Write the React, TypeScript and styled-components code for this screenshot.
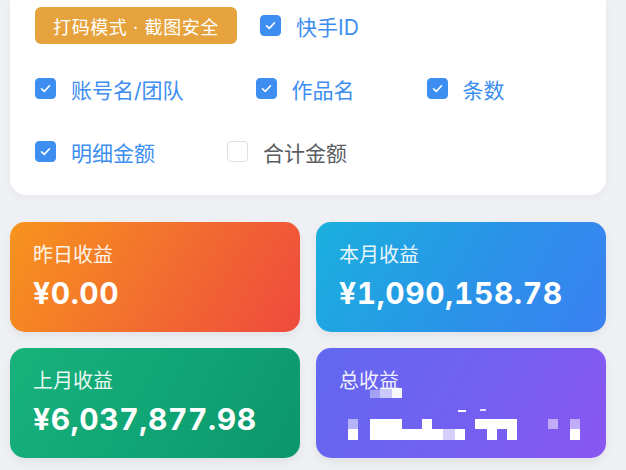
import styled, { createGlobalStyle } from 'styled-components'

const GlobalStyle = createGlobalStyle`
  html, body {
    margin: 0;
    padding: 0;
    background: #eef0f3;
  }
  body {
    font-family: Inter, "Noto Sans CJK SC", "Noto Sans", sans-serif;
    -webkit-font-smoothing: antialiased;
  }
`

const Page = styled.div`
  width: 626px;
  height: 470px;
  overflow: hidden;
  padding: 0 20px 0 10px;
  box-sizing: border-box;
  background: #eef0f3;
`

const OptionsCard = styled.div`
  background: #fff;
  border-radius: 0 0 16px 16px;
  padding: 7px 25px 25px;
  display: flex;
  flex-direction: column;
  gap: 26px;
  box-shadow: 0 2px 8px rgba(0, 0, 0, 0.04);
`

const Row = styled.div<{ $gap: number }>`
  display: flex;
  align-items: center;
  height: 37px;
  gap: ${(p) => p.$gap}px;
`

const Badge = styled.div`
  width: 202px;
  height: 37px;
  box-sizing: border-box;
  display: flex;
  align-items: center;
  justify-content: center;
  background: #e6a23c;
  color: #fff;
  font-size: 18px;
  letter-spacing: 0.6px;
  border-radius: 6px;
  white-space: nowrap;
`

const Option = styled.label<{ $checked: boolean }>`
  display: flex;
  align-items: center;
  gap: 15px;
  font-size: 21px;
  color: ${(p) => (p.$checked ? '#3d8ef0' : '#5a5c61')};
  white-space: nowrap;
`

const Box = styled.span<{ $checked: boolean }>`
  width: 21px;
  height: 21px;
  box-sizing: border-box;
  border-radius: 4px;
  display: flex;
  align-items: center;
  justify-content: center;
  background: ${(p) => (p.$checked ? '#3d8ef0' : '#fff')};
  border: 1px solid ${(p) => (p.$checked ? '#3d8ef0' : '#dcdfe6')};
`

const StatsGrid = styled.div`
  margin-top: 27px;
  display: grid;
  grid-template-columns: repeat(2, minmax(0, 1fr));
  gap: 16px;
`

const gradients = {
  orange: 'linear-gradient(120deg, #f7941d 0%, #f26b30 55%, #ee4a3d 100%)',
  blue: 'linear-gradient(120deg, #1ab0de 0%, #2a93e8 55%, #3b80f2 100%)',
  green: 'linear-gradient(120deg, #17b27c 0%, #10a474 55%, #0c966b 100%)',
  purple: 'linear-gradient(120deg, #6168f0 0%, #7460f2 55%, #8a56f1 100%)',
}

const StatCard = styled.div<{ $tone: keyof typeof gradients }>`
  height: 110px;
  box-sizing: border-box;
  padding: 20px 23px;
  border-radius: 15px;
  background: ${(p) => gradients[p.$tone]};
  color: #fff;
  display: flex;
  flex-direction: column;
  gap: 7px;
  box-shadow: 0 4px 10px rgba(0, 0, 0, 0.06);
`

const StatLabel = styled.div`
  font-size: 20px;
  line-height: 26px;
  color: rgba(255, 255, 255, 0.92);
`

const StatValue = styled.div`
  font-size: 30px;
  line-height: 36px;
  font-weight: 700;
  letter-spacing: 0.6px;
  font-variant-numeric: tabular-nums;
  white-space: nowrap;
`

const MaskedValue = styled.svg`
  display: block;
  flex-shrink: 0;
  margin-top: -15px;
`

const Check = () => (
  <svg width="13" height="13" viewBox="0 0 13 13" fill="none">
    <path d="M2.5 6.8 L5.3 9.4 L10.5 3.8" stroke="#fff" strokeWidth="1.6" strokeLinecap="round" strokeLinejoin="round" />
  </svg>
)

const CheckOption = ({ label, checked = true }: { label: string; checked?: boolean }) => (
  <Option $checked={checked}>
    <Box $checked={checked}>{checked && <Check />}</Box>
    {label}
  </Option>
)

// masked total: mosaic cells [x, y, w, h, opacity]
const mosaic: [number, number, number, number, number][] = [
  [31, 4, 10, 8, 0.4], [41, 2, 12, 10, 0.65], [53, 2, 10, 10, 0.95],
  [119, 24, 8, 2, 1], [141, 23, 6, 2, 0.8],
  [9, 33, 10, 10, 0.5], [31, 33, 32, 10, 1], [83, 33, 10, 10, 1],
  [9, 43, 10, 11, 1], [31, 43, 62, 11, 1], [93, 43, 11, 11, 1], [104, 43, 12, 11, 0.7], [116, 43, 10, 11, 1],
  [136, 33, 42, 10, 1], [148, 43, 10, 11, 1], [168, 43, 10, 11, 1],
  [209, 33, 10, 10, 0.5], [231, 33, 10, 10, 0.5], [231, 43, 10, 11, 1],
]

const Mosaic = () => (
  <MaskedValue width="250" height="55" viewBox="0 0 250 55">
    {mosaic.map(([x, y, w, h, o], i) => (
      <rect key={i} x={x} y={y} width={w} height={h} fill="#fff" opacity={o} />
    ))}
  </MaskedValue>
)

const App = () => {
  return (
    <Page>
      <GlobalStyle />
      <OptionsCard>
        <Row $gap={23}>
          <Badge>打码模式 · 截图安全</Badge>
          <CheckOption label="快手ID" />
        </Row>
        <Row $gap={72}>
          <CheckOption label="账号名/团队" />
          <CheckOption label="作品名" />
          <CheckOption label="条数" />
        </Row>
        <Row $gap={72}>
          <CheckOption label="明细金额" />
          <CheckOption label="合计金额" checked={false} />
        </Row>
      </OptionsCard>
      <StatsGrid>
        <StatCard $tone="orange">
          <StatLabel>昨日收益</StatLabel>
          <StatValue>¥0.00</StatValue>
        </StatCard>
        <StatCard $tone="blue">
          <StatLabel>本月收益</StatLabel>
          <StatValue>¥1,090,158.78</StatValue>
        </StatCard>
        <StatCard $tone="green">
          <StatLabel>上月收益</StatLabel>
          <StatValue>¥6,037,877.98</StatValue>
        </StatCard>
        <StatCard $tone="purple">
          <StatLabel>总收益</StatLabel>
          <Mosaic />
        </StatCard>
      </StatsGrid>
    </Page>
  )
}

export default App
